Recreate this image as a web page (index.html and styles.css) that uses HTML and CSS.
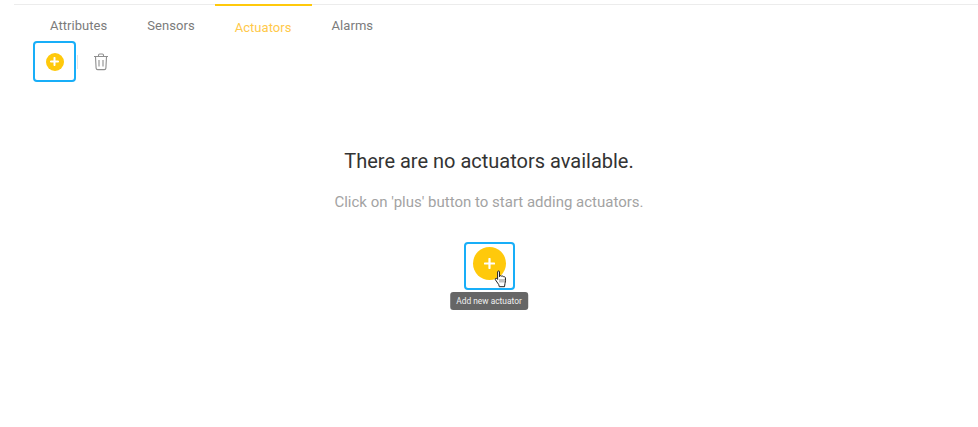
FILE: index.html
```html
<!DOCTYPE html>
<html lang="en">
<head>
  <meta charset="UTF-8" />
  <meta name="viewport" content="width=device-width, initial-scale=1.0"/>
  <title>Actuators</title>
  <link rel="stylesheet" href="styles.css">
</head>
<body>

  <div class="page">
    <ul class="tab-list">
      <li class="tab">Attributes</li>
      <li class="tab">Sensors</li>
      <li class="tab tab-active">Actuators</li>
      <li class="tab">Alarms</li>
    </ul>

    <div class="toolbar">
      <div class="highlight highlight-small">
        <span class="add-btn add-btn-small">
          <svg width="9" height="9" viewBox="0 0 10 10"><path d="M5 1v8M1 5h8" stroke="#fff" stroke-width="2.2" stroke-linecap="round"/></svg>
        </span>
      </div>
      <span class="divider"></span>
      <svg class="trash" width="16" height="18" viewBox="0 0 16 18" fill="none" stroke="#8f8f8f" stroke-width="1.1">
        <path d="M1 3.5h14M5.500 3.300V2.200C5.500 1.400 6 1 6.700 1h2.600c.7 0 1.200.4 1.200 1.200v1.100"/>
        <path d="M2.500 3.700l.6 11.400c.1.900.7 1.500 1.600 1.500h6.600c.9 0 1.500-.6 1.600-1.500l.6-11.400"/>
        <path d="M6 7v6.500M10 7v6.500"/>
      </svg>
    </div>

    <div class="empty">
      <h2 class="empty-title">There are no actuators available.</h2>
      <p class="empty-text">Click on 'plus' button to start adding actuators.</p>
      <div class="add-wrap">
        <div class="highlight highlight-big">
          <span class="add-btn add-btn-big">
            <svg width="11" height="11" viewBox="0 0 12 12"><path d="M6 1v10M1 6h10" stroke="#fff" stroke-width="2.400" stroke-linecap="round"/></svg>
          </span>
        </div>
        <svg class="cursor" width="14" height="18" viewBox="0 0 14 18">
          <path d="M3.600 1.800c0-1.100 1.900-1.100 1.900 0v5l.3-.9c.9-.5 1.700-.3 1.900.4.8-.5 1.600-.3 1.900.5.8-.3 1.700.1 1.800 1 .3 2 .2 4-.4 5.600l-.5 3.300H5.300l-.6-2.200L1.400 9.800c-.6-1 .4-2 1.400-1.300l.8.9z" fill="#fff" stroke="#222" stroke-width="1" stroke-linejoin="round"/>
          <path d="M6 9v3.500M8 9v3.500M10 9v3.500" stroke="#555" stroke-width=".7"/>
        </svg>
        <div class="tooltip">Add new actuator</div>
      </div>
    </div>
  </div>

</body>
</html>
```

FILE: styles.css
```css
/* Page */
html, body {
  margin: 0;
  padding: 0;
  background: #fff;
}

.page {
  height: 427px;
  overflow: hidden;
  font-family: Roboto, "Liberation Sans", sans-serif;
}

/* Tabs */
.tab-list {
  display: flex;
  margin: 4px 0 0 14px;
  padding: 0 0 0 16px;
  list-style: none;
  border-top: 1px solid #ececec;
}

.tab {
  padding: 9px 20px 0;
  height: 27px;
  font-size: 13px;
  line-height: 24px;
  letter-spacing: 0.05px;
  color: #7b7b7b;
  box-sizing: border-box;
}

.tab-active {
  margin-top: -1px;
  padding-top: 10px;
  border-top: 2px solid #ffc90b;
  color: #ffc94a;
}

/* Toolbar */
.toolbar {
  display: flex;
  align-items: center;
  height: 41px;
  margin-top: 9px;
  padding-left: 33px;
}

.highlight {
  display: flex;
  align-items: center;
  justify-content: center;
  box-sizing: border-box;
  border: 2px solid #18aef8;
  border-radius: 4px;
}

.highlight-small {
  width: 43px;
  height: 41px;
}

.highlight-big {
  width: 51px;
  height: 48px;
  padding-bottom: 6px;
}

.add-btn {
  display: flex;
  align-items: center;
  justify-content: center;
  border-radius: 50%;
  background: #ffc90b;
}

.add-btn-small {
  width: 18px;
  height: 18px;
}

.add-btn-big {
  width: 33px;
  height: 33px;
}

.divider {
  width: 1px;
  height: 14px;
  background: #e4e4e4;
  margin-left: 1px;
}

.trash {
  margin-left: 15px;
}

/* Empty state */
.empty {
  display: flex;
  flex-direction: column;
  align-items: center;
}

.empty-title {
  margin: 67px 0 0;
  font-size: 20px;
  font-weight: 400;
  line-height: 24px;
  color: #333;
}

.empty-text {
  margin: 19px 0 0;
  font-size: 15px;
  line-height: 20px;
  color: #a3a3a3;
}

.add-wrap {
  position: relative;
  margin-top: 30px;
}

.cursor {
  position: absolute;
  left: 30px;
  top: 28px;
}

.tooltip {
  position: absolute;
  top: 50px;
  left: 50%;
  transform: translateX(-50%);
  padding: 0 6px;
  height: 18px;
  border-radius: 3px;
  background: #666;
  color: #f0f0f0;
  font-size: 8.4px;
  line-height: 18px;
  white-space: nowrap;
}
```
